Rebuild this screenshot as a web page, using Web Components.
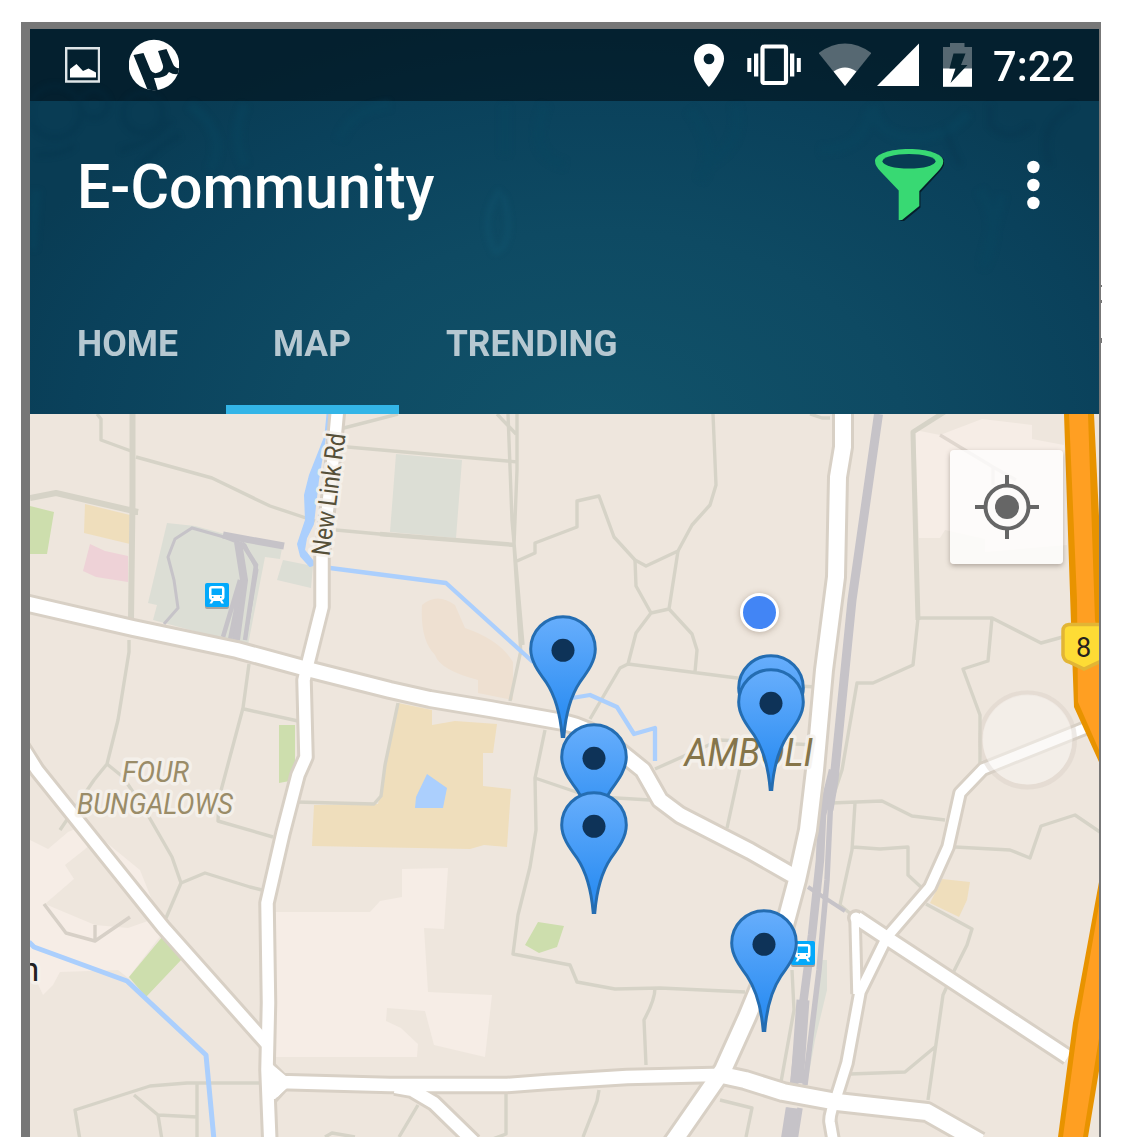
<!DOCTYPE html>
<html lang="en">
<head>
<meta charset="utf-8">
<title>E-Community</title>
<style>
  body { margin: 0; font-family: Roboto, "Liberation Sans", sans-serif;
    background: linear-gradient(#777,#777) 1101px 285px/1px 2px no-repeat, linear-gradient(#777,#777) 1101px 300px/1px 3px no-repeat, linear-gradient(#777,#777) 1101px 338px/1px 5px no-repeat, #fff; }
</style>
</head>
<body>
<phone-frame>
  <app-header>
    <status-bar></status-bar>
    <title-bar>E-Community</title-bar>
    <tab-strip>
      <tab-item width="101">HOME</tab-item>
      <tab-item width="78" active>MAP</tab-item>
      <tab-item width="171.500">TRENDING</tab-item>
    </tab-strip>
  </app-header>
  <city-map>
    <user-dot x="759" y="612"></user-dot>
    <map-pin x="563" y="614"></map-pin>
    <map-pin x="594" y="722"></map-pin>
    <map-pin x="594" y="790"></map-pin>
    <map-pin x="771" y="653"></map-pin>
    <map-pin x="771" y="667"></map-pin>
    <map-pin x="764" y="908"></map-pin>
    <locate-button></locate-button>
  </city-map>
</phone-frame>

<script>
const define = (name, html, init) => customElements.define(name, class extends HTMLElement {
  connectedCallback() {
    if (this.shadowRoot) return;
    this.attachShadow({ mode: 'open' }).innerHTML = html;
    if (init) init.call(this, this.shadowRoot);
  }
});

/* Scales its text horizontally to an exact width */
define('fit-text', `
<style>
  :host { display: block; white-space: nowrap; }
  span { display: inline-block; transform-origin: 0 50%; }
</style><span><slot></slot></span>`, function (root) {
  const w = +this.getAttribute('width');
  const s = root.querySelector('span');
  this.style.width = w + 'px';
  const natural = s.getBoundingClientRect().width;
  if (natural) s.style.transform = `scaleX(${w / natural})`;
});

define('phone-frame', `
<style>
  :host { display: flex; flex-direction: column; box-sizing: border-box; width: 1080px; height: 1115px;
    margin: 22px 0 0 21px; border: solid #777; border-width: 7px 2px 0 9px; overflow: hidden; }
</style><slot></slot>`);
document.documentElement.style.overflow = 'hidden';

define('app-header', `
<style>
  :host { display: grid; height: 385px; flex: none;
    background: radial-gradient(ellipse 640px 430px at 53% 106%, #11536a 0%, #0e4a63 48%, #0a415b 82%, #093c54 100%); }
  :host > * { grid-area: 1 / 1; }
  .content { display: flex; flex-direction: column; min-width: 0; }
  svg { display: block; filter: blur(2.5px); }
</style>
<svg width="1069" height="385" viewBox="30 29 1069 385" fill="none" stroke-width="6">
  <g stroke="#042f45" opacity=".2">
    <circle cx="55" cy="112" r="26"/><circle cx="94" cy="104" r="14"/><circle cx="143" cy="113" r="20"/>
    <path d="M36 155q30 0 38-10M120 150q40-10 50-30M140 165q20-20 40-30"/>
    <path d="M1075 105q-40 20-25 60M990 105v20q20 20 40 0M960 165q-10-20-16-40"/>
  </g>
  <g stroke="#08455f" opacity=".4" stroke-width="10">
    <path d="M190 105q40 30 20 65M245 105q-15 30 0 60M340 140q10-30 50-35M505 105v50M545 105q-20 50 20 60M735 105q10 40-30 60M820 150q45 0 50-40M690 110q30 40 10 70M873 106q5 32 40 32t55-25M980 190q20 30 8 65t14-60M36 190l-4 60"/>
  </g>
  <path stroke="#0f5873" opacity=".3" d="M500 190q-22 30-5 62 8 0 12-15t-4-42"/>
</svg>
<div class="content"><slot></slot></div>`);

define('status-bar', `
<style>
  :host { display: flex; height: 72px; background: rgba(0,7,14,.52); color: #fff; padding-left: 35px; }
  svg { display: block; flex: none; height: 72px; }
  .gap { flex: 1; }
  fit-text { font-size: 42px; font-weight: 500; line-height: 76px; margin: 0 24px 0 21px; }
</style>
<svg width="35" viewBox="65 29 35 72"><path d="M66.200 48.200H99V81.500H66.200Z" fill="none" stroke="#dfe5e8" stroke-width="2.400"/><path d="M70 77.500V69l6.500-5 6.500 7 5.500-2.500 7.500 4v5Z" fill="#fff"/></svg>
<svg width="50" viewBox="129 29 50 72" style="margin-left:29px"><clipPath id="c"><circle cx="154" cy="65" r="25.300"/></clipPath><circle cx="154" cy="65" r="25.300" fill="#fff"/>
<path clip-path="url(#c)" fill="#05212f" d="M133.500 55l10-2 7 17q3 5 9 2 5-3 3-8l-4.500-13 8.500-2 6.500 15q2 5 8 4v5q-6 3-12-1-3 6-15 6l4 13h-10Z"/></svg>
<div class="gap"></div>
<svg width="30" viewBox="694 29 30 72"><path fill="#fff" fill-rule="evenodd" d="M709 43.700a15 15 0 0 0-15 15c0 11 15 28.300 15 28.300s15-17.300 15-28.300a15 15 0 0 0-15-15Zm0 9.800a5.400 5.400 0 1 1 0 10.800 5.400 5.400 0 0 1 0-10.800Z"/></svg>
<svg width="54" viewBox="747 29 54 72" style="margin-left:23px"><rect x="762.500" y="46.500" width="23.500" height="36.500" rx="2" fill="none" stroke="#fff" stroke-width="4.200"/><path fill="#fff" d="M754 53.500h4.300v23h-4.300zM747.300 58h4v14h-4zM790 53.500h4.300v23H790zM796.800 58h4v14h-4z"/></svg>
<svg width="52" viewBox="819 29 52 72" style="margin-left:18px"><path fill="#566872" d="M845 86L818.500 53q26.500-19 53 0Z"/><path fill="#fff" d="M845 86L833.600 71.500q11.400-8 22.800 0Z"/></svg>
<svg width="42" viewBox="877 29 42 72" style="margin-left:6px"><path fill="#fff" d="M877 86H919V43.500Z"/></svg>
<svg width="29" viewBox="943 29 29 72" style="margin-left:24px"><path fill="#566872" d="M943 47h7v-4h14.500v4h7.500v22h-29z"/><path fill="#fff" d="M943 68.500h29v18.300h-29z"/><path fill="#05222e" d="M953.500 53.500h12l-4.500 11.500h6.500L950.500 83l5-14.500h-6z"/></svg>
<fit-text width="82">7:22</fit-text>`);

define('title-bar', `
<style>
  :host { display: flex; height: 168px; color: #fff; padding-left: 47px; }
  fit-text { font-size: 60.500px; font-weight: 500; line-height: 174px; }
  .gap { flex: 1; }
  svg { display: block; height: 168px; flex: none; }
</style>
<fit-text width="357.500"><slot></slot></fit-text><div class="gap"></div>
<svg width="70" viewBox="874 101 70 168"><path fill="#061f2b" fill-rule="evenodd" transform="translate(1 1)" d="M909 149c19 0 34.500 5 34.500 12q0 5-6 11l-18 19.500v15L903 220h-3.500v-29.500L881 172q-6-6-6-11c0-7 15-12 34-12Z"/><path fill="#38d973" d="M909 149c19 0 34.300 5 34.300 12q0 5-6 11l-18 19v15L902 220h-3.300v-29.500L881 172q-6-6-6-11c0-7 15-12 34-12Z"/><ellipse cx="909" cy="161.300" rx="26.500" ry="7.300" fill="#083b53"/></svg>
<svg width="14" viewBox="1026 101 14 168" style="margin:0 59px 0 82px"><g fill="#fff"><circle cx="1033.400" cy="167" r="6.200"/><circle cx="1033.400" cy="185" r="6.200"/><circle cx="1033.400" cy="203" r="6.200"/></g></svg>`);

define('tab-strip', `<style>:host { display: flex; height: 145px; }</style><slot></slot>`);

define('tab-item', `
<style>
  :host { display: flex; box-sizing: border-box; padding: 0 48px 0 47px; color: #b6c8d1; height: 145px; border-bottom: 9px solid transparent; }
  :host([active]) { border-color: #33b5e7; }
  fit-text { font-size: 36px; font-weight: 700; line-height: 151px; }
</style><fit-text><slot></slot></fit-text>`, function (root) {
  const old = root.querySelector('fit-text');
  const fresh = document.createElement('fit-text');
  fresh.setAttribute('width', this.getAttribute('width'));
  fresh.append(document.createElement('slot'));
  old.replaceWith(fresh);
});

define('city-map', `
<style>
  :host { display: block; position: relative; height: 723px; width: 1069px; overflow: hidden; background: #eee6dd; }
  svg { display: block; }
  text { font-family: Roboto, "Liberation Sans", sans-serif; }
</style>
<svg width="1069" height="723" viewBox="30 414 1069 723">
  <g stroke="none">
    <g fill="#f6ede6">
      <path d="M30 840L48 849 68 832 85 825 140 870 160 920 165 930 128 978 118 970 60 972 53 985 43 995 36 980 30 975Z"/>
      <path d="M915 430L940 435 982 419 1032 425V439L1064 445 1067 545 985 552V539L945 530 940 538H919Z"/>
      <path d="M276 912L370 912 380 901 402 897V869L448 868 444 929 424 928 428 992 492 995 485 1057 434 1045 425 1011 387 1008 386 1021 401 1028 418 1044 417 1057H276Z"/>
    </g>
    <path fill="#eee6dd" d="M84 850L100 836 165 915 128 928 95 925 45 904 74 879 65 865Z"/>
    <g fill="#dcded5">
      <path d="M167 523L195 526 225 534 282 548 280 559 265 557 248 645 220 638 153 620 157 605 148 603Z"/>
      <path d="M283 560L313 566 311 588 277 580ZM396 454L462 460 456 538 390 532ZM820 960h7l0 30-12 50-9 50Z"/>
    </g>
    <path fill="#eee0d1" d="M422 605Q437 592 455 605L465 628Q500 640 513 662V700L478 693V680Q440 670 435 655Q420 640 422 605Z"/>
    <g fill="#efdebc">
      <path d="M85 504L130 515V544L84 533Z"/>
      <path d="M398 703L432 710V725L455 721 497 724 493 753H483V786L511 789 507 847 484 845 470 849 312 846 314 805 378 804 385 770Z"/>
      <path d="M942 879L970 882 967 900 959 917 930 903Z"/>
    </g>
    <path fill="#eed2d7" d="M90 544L105 551 128 556V582L96 577 83 571Z"/>
    <g fill="#cddead">
      <path d="M30 506L54 512 47 554H30ZM279 725H295V780L279 783ZM163 936L182 959 146 997 129 977ZM538 922L564 926 557 947 539 953 525 945Z"/>
    </g>
    <path fill="#abcffd" d="M427 774L447 788 443 808H415L416 797Z"/>
  </g>

  <g fill="none" stroke="#d6d3c7" stroke-width="3.400" stroke-linejoin="round">
    <path stroke-width="6" d="M132.500 414V500L131 620M30 498L56 493 138 512M132 512h6"/>
    <path d="M97 414L101 419V440L131 451M136 457L212 478 270 506 315 521M336 430L398 414M336 446L518 462M336 530L390 535"/>
    <path stroke-width="4.500" d="M380 534L515 545"/>
    <path d="M497 414L516 434M508 414L512 520 523 645M517 414V470L514 545 521 655M521 650L510 701M517 561L535 553V543L577 527V501L599 496 614 537 635 560 646 566 678 551 692 525 710 505 716 485 713 414"/>
    <path d="M678 551L669 609 651 613 636 586 635 560M651 613L636 633 628 664M669 609L692 634 697 650 695 672M590 719L620 668 628 664 745 679M800 686L815 687M545 730L535 778 536 830 530 867 518 915 513 954 570 965 577 982 615 989 660 988 745 992M535 778L585 795M600 797L650 800M655 769L720 740 815 745M740 768L727 828M655 988Q655 1000 644 1020L646 1065"/>
    <path d="M129 640V652L118 720 107 764 94 780 60 830M107 764L123 777 145 810 172 857 181 883 166 918M181 883L205 873 250 887 262 890M249 664L243 708 219 798 218 821 273 837M244 709L298 721M398 703L385 765 381 796 374 804 296 802"/>
    <path stroke="#d7d0c7" d="M44 904L66 933 95 941 130 917M95 941V925"/>
    <path d="M80 1140L75 1110 150 1086 187 1083H260M134 1095L158 1115 162 1140M158 1115L197 1117M197 1083V1140M325 1137L332 1133 355 1137M418 1105L399 1137M506 1093V1134L490 1140M599 1090L597 1101 583 1137M720 1100L752 1108 746 1137"/>
    <path stroke-width="5" d="M946 411L913 432 916 550 918 620"/>
    <path d="M830 418h-8l-12-4M918 618H992L1041 643 1070 635M992 618L988 661 963 669 980 715V770M918 618L913 665 873 683H857L842 770 831 803 882 801 912 816 945 820M855 803L852 850 840 905 852 915M853 847L880 849 908 847V875L923 889M955 847L1010 850 1030 858 1041 826 1075 815 1100 832M926 904L972 929 967 945 953 973 943 995 928 1100M850 1074L905 1072 935 1047M792 970L794 1010 781 1082"/>
    <path stroke="#e0d7cf" d="M940 435L993 467V485M993 467L1016 480"/>
  </g>

  <g fill="none" stroke="#c6c3c8">
    <path stroke-width="9" d="M878.500 414L852 600 834 780 829 810"/>
    <path stroke-width="8.500" d="M833 770L822 815 820 860 812 935 801 1020 794 1085M790 1108L785 1140"/>
    <path stroke-width="5.500" d="M831 795L827 880 819 970 805 1085M800 1108L795 1140"/>
    <path stroke-width="13" d="M803 1000L797 1083M793 1108L789 1140"/>
    <path stroke-width="4" d="M808 887L845 911"/>
    <path stroke-width="3" d="M164 624L178 608 174 580 168 557 175 539 192 528 224 537 245 545 257 570 245 640"/>
    <path stroke-width="7" d="M223 535L284 546"/>
    <path stroke-width="8" d="M238 542L244 580 236 640"/>
    <path stroke-width="4.500" d="M242 543L256 565 245 640M240 580L223 637M240 590L230 640"/>
  </g>

  <g fill="none" stroke="#abcffd" stroke-width="4.300" stroke-linejoin="round">
    <path stroke-width="3" d="M328 414L326 435"/>
    <path fill="#abcffd" stroke-width="2" d="M325 437L310 475 305 495 306 520 298 544 301 556 310 566 315 564 304 550 306 538 313 524 318 480Z"/>
    <path d="M330 568L446 583 533 662M572 698L590 695 617 707 634 734 655 728V761"/>
    <path d="M29 942L34 947 127 981 206 1055 214 1140" stroke-width="5"/>
  </g>

  <g id="roads" fill="none" stroke-linejoin="round"></g>

  <g stroke="none">
    <path fill="#e89300" d="M1064 414H1094L1099 516V762L1074 707 1071 623ZM1099 882L1073 1023 1058 1137H1088L1100 1065Z"/>
    <path fill="#ff9f22" d="M1069 414H1088L1095 620 1099 640V750L1078 702 1077 600ZM1100 900L1078 1025 1063 1137H1083L1100 1032Z"/>
    <path fill="#fedc35" stroke="#e2b535" stroke-width="3.500" d="M1110 624.500H1069Q1063 625 1063 631V655Q1064 661 1069 662L1084 669 1099 662H1110Z"/>
    <text x="1076" y="656.500" font-size="27" fill="#25221d" textLength="15">8</text>
  </g>

  <g id="station"><rect x="205" y="585" width="24" height="24" rx="2" fill="#a9a39e"/><rect x="205" y="583" width="24" height="24" rx="2" fill="#03a9fb"/>
    <path fill="#fff" fill-rule="evenodd" d="M212 586h9.500q3 0 3 3v8.500q0 2-2.500 2.500l2 3.500h-2.500l-1.500-2.500h-6.500l-1.500 2.500h-2.500l2-3.500q-2.500-.5-2.500-2.500V589q0-3 3-3Zm-.5 2.500v6.500h10.500V588.500ZM212 596.500v1.500h1.500v-1.500Zm8 0v1.500h1.500v-1.500Z"/></g>
  <use href="#station" x="586" y="358"/>

  <g stroke="#f6f2ed" stroke-width="7" stroke-linejoin="round" paint-order="stroke" stroke-opacity=".85">
    <g font-style="italic" fill="#9a8c68">
      <text x="122" y="782" font-size="29" textLength="67" lengthAdjust="spacingAndGlyphs">FOUR</text>
      <text x="77" y="814" font-size="30" textLength="156" lengthAdjust="spacingAndGlyphs">BUNGALOWS</text>
      <text x="684.500" y="766" font-size="39" fill="#85754a" textLength="128.500" lengthAdjust="spacingAndGlyphs">AMBOLI</text>
    </g>
    <text transform="translate(329.500 556.500) rotate(-82.500)" font-size="26" fill="#565039" textLength="123" lengthAdjust="spacingAndGlyphs">New Link Rd</text>
    <text x="21" y="981" font-size="33" fill="#222">n</text>
  </g>
  <circle cx="1027.500" cy="740" r="47" fill="none" stroke="#d9d0c8" stroke-opacity=".45" stroke-width="5"/>
  <circle cx="1027.500" cy="739.500" r="45" fill="#f7f4f1" fill-opacity=".55"/>
</svg>
<slot></slot>`, function (root) {
  /* [path, width of the white surface] */
  const roads = [
    ['M20 602L133 628 237 650 307 669 390 690 430 699 490 709 563 722Q590 728 612 745L643 770 660 800 680 815 750 851 792 875', 14],
    ['M338 405L332 470 322 557V607L308 663 304 680 306 757 298 775 283 833 267 903 268.500 1003 267 1070 270 1145', 11.5],
    ['M20 743L37 770 163 927 267 1044', 11.5],
    ['M267 1081L280 1082 390 1085H507L547 1082 627 1077 713 1075 727 1076', 12.5],
    ['M722 1075L745 1080 783 1092 837 1102 927 1112 980 1142', 16],
    ['M843 405V447L838 477 836 577 824 670 815 770 808 830 797 880 785 925 747 1017 723 1070 671 1145', 16],
    ['M395 1087L412 1090 434 1103 474 1142', 12],
    ['M1088 727L983 769 960 793 948 847 930 887 887 937 860 992 847 1063 837 1095Q829 1115 830 1122L834 1145', 9.5],
    ['M857 994L855 918', 7.5],
    ['M857 918L887 938 1068 1057', 12.5]
  ];
  const draw = (color, extra) => roads.map(([d, w]) => `<path d="${d}" stroke="${color}" stroke-width="${w + extra}"/>`).join('');
  root.querySelector('#roads').innerHTML = draw('#d8d0c5', 6) +
    '<circle cx="856" cy="918" r="9" fill="#d8d0c5"/><path fill="#fff" stroke="#d8d0c5" stroke-width="3" d="M274 1064L286 1076V1090L276 1101Z"/>' +
    draw('#fff', 0) + '<circle cx="856" cy="918" r="5.500" fill="#fff"/><path fill="#fff" d="M270 1062L274 1066 287 1077V1088L275 1099H270Z"/>';
});

/* Places a marker by its map coordinate */
function place(el) {
  el.style.left = (el.getAttribute('x') - 30) + 'px';
  el.style.top = (el.getAttribute('y') - 414) + 'px';
}

define('map-pin', `
<style>:host { display: block; position: absolute; margin-left: -35px; } svg { display: block; }</style>
<svg width="70" height="125" viewBox="-35 0 70 125">
  <defs><linearGradient id="g" x1="0" y1="0" x2="0" y2="1"><stop offset="0" stop-color="#67aefc"/><stop offset=".8" stop-color="#2f8ff3"/></linearGradient></defs>
  <path fill="url(#g)" stroke="#246db2" stroke-width="3" d="M-.8 122.500C-3 96-9 80-17 68C-25 57-32.300 47-32.300 35A32.300 32.300 0 0 1 32.300 35C32.300 47 25 57 17 68C9 80 3 96 .8 122.500Z"/>
  <circle cx="0" cy="36.300" r="11.500" fill="#0e3358"/>
</svg>`, function () { place(this); });

define('user-dot', `
<style>:host { display: block; position: absolute; box-sizing: border-box; width: 39px; height: 39px; margin: -19.500px; border-radius: 50%; background: #4285f5; border: 3px solid #fff; box-shadow: 0 1px 6px rgba(90,70,50,.35); }</style>`,
function () { place(this); });

define('locate-button', `
<style>
  :host { display: flex; position: absolute; left: 920px; top: 36px; width: 113px; height: 114px; border-radius: 4px;
    background: rgba(255,255,255,.78); box-shadow: 0 2px 5px rgba(60,50,40,.35); align-items: center; justify-content: center; }
</style>
<svg width="66" height="66" viewBox="-33 -33 66 66"><circle r="21.500" fill="none" stroke="#666" stroke-width="4"/><circle r="12" fill="#666"/><path stroke="#666" stroke-width="4" d="M0-32V-22M0 22V32M-32 0H-22M22 0H32"/></svg>`);
</script>
</body>
</html>
